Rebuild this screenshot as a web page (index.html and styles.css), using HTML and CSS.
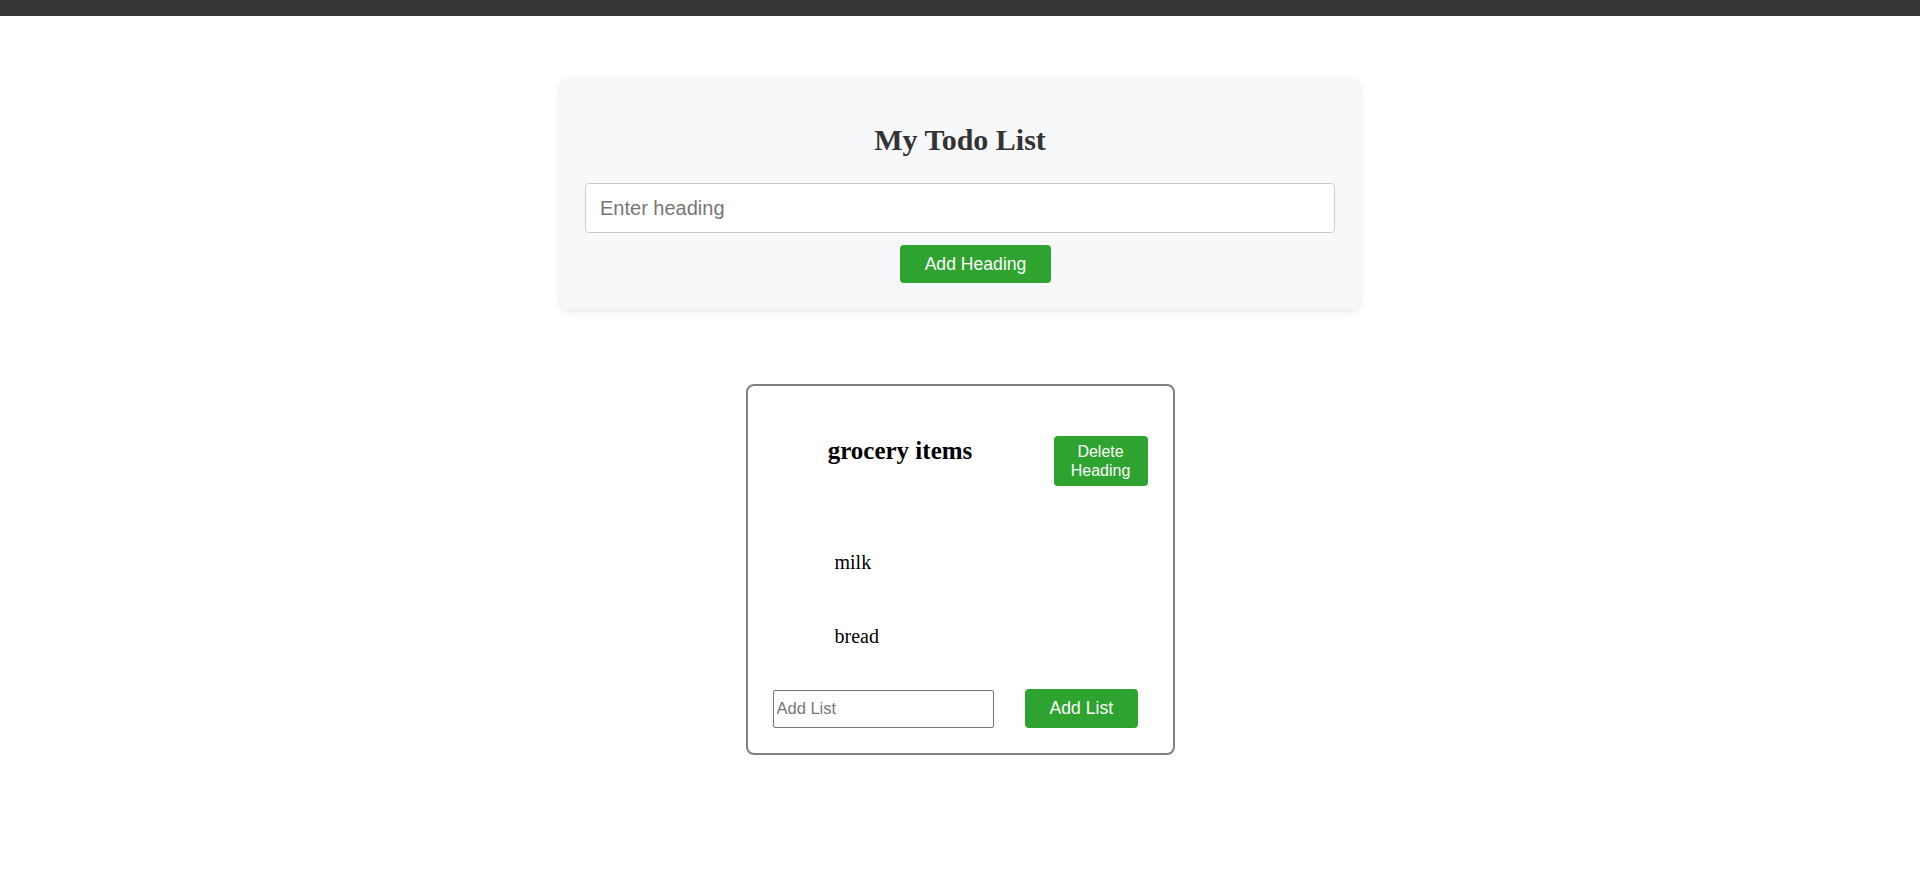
FILE: index.html
```html
<!DOCTYPE html>
<html lang="en">
<head>
<meta charset="utf-8">
<title>My Todo List</title>
<link rel="stylesheet" href="styles.css">
</head>
<body>
<div class="topbar"></div>
<main class="page">
  <section class="todo-card">
    <h1 class="todo-title">My Todo List</h1>
    <input class="heading-input" type="text" placeholder="Enter heading" autofocus>
    <div class="add-heading-row">
      <button class="btn btn-add-heading">Add Heading</button>
    </div>
  </section>

  <section class="list-card">
    <div class="list-header">
      <h2 class="list-title">grocery items</h2>
      <button class="btn-delete">Delete Heading</button>
    </div>
    <ul class="items">
      <li class="item">milk</li>
      <li class="item">bread</li>
    </ul>
    <div class="add-row">
      <input class="list-input" type="text" placeholder="Add List">
      <button class="btn btn-add-list">Add List</button>
    </div>
  </section>
</main>
</body>
</html>
```

FILE: styles.css
```css
html, body {
  margin: 0;
  padding: 0;
  background: #ffffff;
}

body {
  font-family: "Liberation Serif", "Times New Roman", serif;
}

.topbar {
  height: 16px;
  background: #353535;
}

.page {
  display: flex;
  flex-direction: column;
  align-items: center;
  padding-top: 63px;
}

.todo-card {
  box-sizing: border-box;
  width: 800px;
  padding: 25px 25px 26px;
  background: #f7f8fa;
  border-radius: 8px;
  box-shadow: 0 2px 10px rgba(0, 0, 0, 0.1);
  display: flex;
  flex-direction: column;
  align-items: center;
}

.todo-title {
  margin: 20px 0 27px;
  font-size: 30px;
  line-height: 32px;
  font-weight: bold;
  color: #333333;
  text-align: center;
}

.heading-input {
  box-sizing: border-box;
  width: 750px;
  height: 50px;
  margin: 0;
  padding: 0 14px;
  border: 1px solid #cccccc;
  border-radius: 4px;
  background: #ffffff;
  font-family: "Liberation Sans", Arial, sans-serif;
  font-size: 20px;
  color: #333333;
  caret-color: #000000;
}

.heading-input:focus {
  outline: none;
}

.heading-input::placeholder,
.list-input::placeholder {
  color: #767676;
}

.add-heading-row {
  display: flex;
  justify-content: center;
  margin-top: 12px;
  padding-left: 31px;
}

.btn {
  box-sizing: border-box;
  height: 38px;
  padding: 0 25px;
  border: none;
  border-radius: 4px;
  background: #2ea32f;
  color: #ffffff;
  font-family: "Liberation Sans", Arial, sans-serif;
  font-size: 17.6px;
  cursor: pointer;
}

.btn-add-list {
  height: 39px;
}

.list-card {
  box-sizing: border-box;
  width: 429px;
  margin-top: 75px;
  padding: 25px;
  border: 2px solid #808080;
  border-radius: 8px;
  background: #ffffff;
}

.list-header {
  display: flex;
  align-items: flex-start;
  margin-top: 25px;
}

.list-title {
  flex: 1;
  margin: 0 26px 0 0;
  font-size: 25px;
  line-height: 29px;
  font-weight: bold;
  color: #000000;
  text-align: center;
}

.btn-delete {
  box-sizing: border-box;
  width: 94px;
  height: 50px;
  padding: 6px 10px;
  border: none;
  border-radius: 4px;
  background: #2ea32f;
  color: #ffffff;
  font-family: "Liberation Sans", Arial, sans-serif;
  font-size: 16px;
  line-height: 19px;
  cursor: pointer;
}

.items {
  list-style: none;
  margin: 65px 0 0;
  padding: 0 0 0 62px;
}

.item {
  font-size: 20px;
  line-height: 23px;
  color: #000000;
  margin-bottom: 51px;
}

.item:last-child {
  margin-bottom: 0;
}

.add-row {
  display: flex;
  align-items: center;
  margin-top: 41px;
}

.list-input {
  box-sizing: border-box;
  width: 221px;
  height: 38px;
  margin: 0 31px 0 0;
  padding: 0 3px;
  border: 1px solid #767676;
  border-radius: 2px;
  font-family: "Liberation Sans", Arial, sans-serif;
  font-size: 16.5px;
  color: #000000;
}
```
